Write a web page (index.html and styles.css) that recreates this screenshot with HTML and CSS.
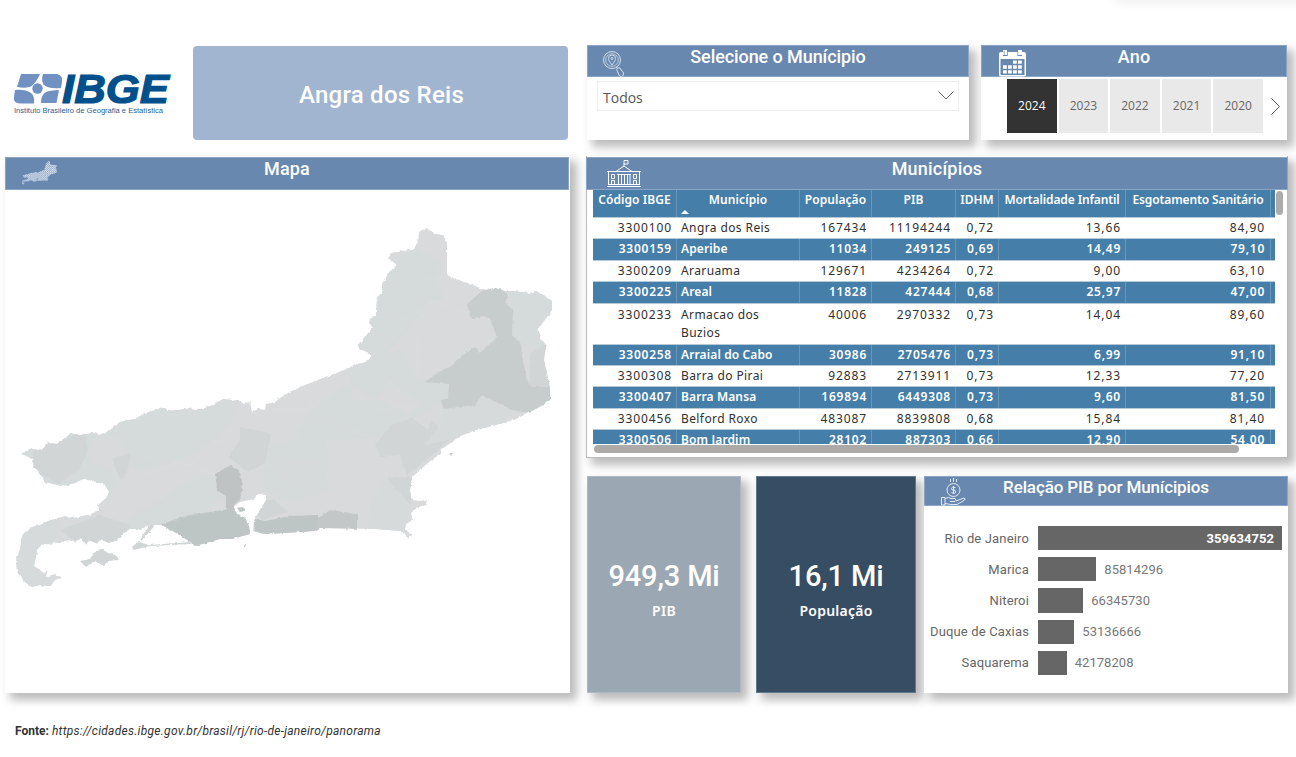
FILE: index.html
```html
<!DOCTYPE html>
<html lang="pt-BR">
<head>
<meta charset="utf-8">
<title>IBGE - Rio de Janeiro</title>
<link rel="stylesheet" href="styles.css">
</head>
<body>
<div class="page">
  <div class="top-shade"></div>
  <div class="columns">
    <section class="left">
      <header class="brand-row">
        <svg class="logo" viewBox="0 0 164 50" width="164" height="50">
          <g fill="#7191c2">
            <path d="M8 4H27Q23 13 18 16.500Q14 18.500 4 17Z"/>
            <path d="M30 4H44Q50 5 49 12L48 18Q34 19 30.500 14.500Q28 10 30 4Z"/>
            <path d="M46 20L43.500 33H28Q28 26 32 22.500Q37 20 46 20Z"/>
            <path d="M2 20Q12 19 18 23Q22 26 21 33.500H7Q0 33 1 27Z"/>
            <circle cx="24.500" cy="18.500" r="5.200"/>
          </g>
          <text class="logo-word" x="49" y="33" textLength="107" lengthAdjust="spacingAndGlyphs">IBGE</text>
          <text class="logo-sub" x="1" y="43" textLength="149" lengthAdjust="spacingAndGlyphs">Instituto Brasileiro de Geografia e Estatística</text>
        </svg>
        <div class="city">Angra dos Reis</div>
      </header>
      <article class="card map-card">
        <div class="bar bar-map">
          <svg class="icon icon-map" viewBox="0 215 570 380" width="37" height="25">
            <defs><pattern id="dots" width="32" height="32" patternUnits="userSpaceOnUse"><path d="M0 0h16v16h-16zM16 16h16v16h-16z" fill="#dfe7f1"/></pattern></defs>
            <use href="#state" fill="#8aa4c5"/>
            <use href="#state" fill="url(#dots)"/>
          </svg>
          <h2>Mapa</h2>
        </div>
        <svg class="map" viewBox="5 190 565 503" width="565" height="503">
          <defs>
            <path id="state" d="M21 454L32 448L42 450L48 443L57 444L71 433.500L80 435L96 432.500L99 435L109 431L120 422L134 419L150 411.500L164 408L167 411L187 409L190 407L193 410L205 408L213 405L223 399L240 401L244 404L250 401.500L252 412L258 409L265 410L266 404L275 402L287 393L305 385L320 379L340 371.500L358 364L371 359L371 354L365 351L359 349L358 345L373 327.500L369 324L371 317L376 316L377 298L382 292L382 284L388 274L397 265L388 258L392 253L402 251L413 250L418 242L419 232L427 228L434 233L445 236L447 244L447 275L455 279L468 283L485 290L495 288L505 291L513 291L530 293L536 291L547 297L552 301L552 310L538 329L541 339L546 345L544 360L550 387L550 400L543 405L530 412L516 419L500 424L476 430L460 436L441 450L440 454L428 463L418 472L412 477L410 490L411 498L418 501L427 500L426 504L417 508L411 513L413 520L406 524L405 530L410 533L412 536L408 539L402 531L375 529L320 528L314 531L285 533L265 534L253 531L254 521L257 514L262 507L266 500L266 495L258 494L254 499L240 502L233 507L237 514L245 518L249 526L250 534L232 539L220 539L195 546L192 543L178 534L162 525L150 525L140 529L130 529L122 534L118 540L108 543L100 539L98 544L89 540L86 545L81 538L75 543L70 540L55 543L40 545L37 551L34 566L44 573L48 570L46 577L55 574L62 578L55 580L50 586L40 585L32 587L25 582L17 572L16 560L20 550L22 535L30 528L48 521L65 516L72 518L92 514L99 509L98 505L107 497L109 492L105 485L97 482L83 479L75 483L62 486L45 482L41 475L34 467L32 459L27 456Z"/>
            <clipPath id="inside"><use href="#state"/></clipPath>
            <filter id="coast" x="0" y="0" width="1" height="1">
              <feTurbulence type="fractalNoise" baseFrequency=".25" numOctaves="2" seed="4" result="n"/>
              <feDisplacementMap in="SourceGraphic" in2="n" scale="3" xChannelSelector="R" yChannelSelector="G"/>
            </filter>
          </defs>
          <g filter="url(#coast)">
            <rect x="5" y="190" width="565" height="503" fill="#fff"/>
            <use href="#state" fill="#d9dadc"/>
            <g clip-path="url(#inside)">
              <path fill="#d5dadb" d="M15 440L71 425L98 430L87 450L90 462L112 470L118 482L110 496L75 490L30 485ZM98 430L160 405L240 396L232 420L215 440L180 460L135 470L120 440ZM397 262L410 245L440 262L435 280L445 300L430 300L415 320L395 345L375 362L350 350L365 310ZM505 290L560 290L555 350L520 345L513 335L512 300ZM420 405L390 380L375 400L345 385L310 410L295 440L270 445L263 470L265 490L290 500L320 495L330 470L325 440L385 438L400 420ZM350 365L400 350L418 378L447 382L448 400L415 418L380 400L352 400ZM190 480L160 500L130 515L110 545L150 545L200 530L240 500L225 475Z"/>
              <path fill="#d1d5d6" d="M60 440L85 432L88 450L80 468L58 484L35 470L33 450ZM112 458L131 454L127 472L121 480L116 470ZM100 515L130 525L118 543L80 545L60 530ZM240 427L271 433L265 463L248 472L228 457L240 440ZM375 445L391 425L412 418L428 430L432 420L450 440L420 465L407 475L400 455L380 456ZM386 478L414 477L410 505ZM530 353L545 345L552 388H529ZM247 500L275 500L288 512L262 520Z"/>
              <path fill="#d6dadb" d="M15 510L60 516L55 540L35 570L65 590H10ZM445 403L482 395L512 412L500 430L425 445L440 425ZM280 460L325 458L335 490L310 495L285 485ZM386 476L410 510L402 538L368 532L370 505Z"/>
              <path fill="#d9dadc" d="M330 460L370 457L378 475L365 495L340 500L325 480ZM205 510L222 500L227 514L208 516Z"/>
              <path fill="#c7cdcd" d="M467 304L483 290L497 287L508 294L505 303L513 310L512 335L521 344L522 356L527 380L530 387H553V404L530 413L512 410L482 395L475 405L443 409L441 400L448 399L449 384L425 382L442 370L450 367L460 357L475 347L480 353L497 337L490 319L484 316L471 319Z"/>
              <path fill="#bec5c5" d="M160 525L185 516L210 512L228 509L240 512L250 522L252 535L195 548ZM254 519L265 521L290 516L318 515V535H255Z"/>
              <path fill="#bfc3c4" d="M215 475L230 465L239 471L243 485L240 500L234 505L235 512L226 510V496L218 491Z"/>
              <path fill="#c3c7c8" d="M318 518L330 510L357 514V529H316Z"/>
              <path fill="none" stroke="#dcdee0" stroke-width=".6" d="M120 424L140 455L190 465L220 440M190 408L215 440M130 482L170 500M140 475L180 462L215 475M240 402L260 430L300 425M266 410L310 410L350 384M300 387L320 420L380 440M340 372L375 410L420 405M418 338V382L380 400M371 358L400 330L440 305M433 300L410 320L375 317M382 285L420 280L447 276M265 463L285 470M330 500L370 498M430 300L467 312"/>
            </g>
            <g fill="#d1d5d6">
              <path d="M80 561L90 559L95 552L102 549L108 553L115 555L119 560L109 561L104 566L95 561L86 567Z"/>
              <path d="M132 547L138 542L150 545L190 542L192 544L150 546L134 550ZM74 531L80 527L88 530L86 536L92 540L84 541ZM150 525L155 524L152 529L141 541L140 539Z"/>
              <path fill="#bec5c5" d="M237 508L247 506L249 510L240 512ZM243 545L246 544L245 547ZM449 454L453 454L451 456Z"/>
              <path fill="#fff" d="M240 506L250 500L262 497L258 505L252 512L247 511L244 508Z"/>
            </g>
          </g>
        </svg>
      </article>
    </section>

    <section class="right">
      <div class="filters">
        <article class="card select-card">
          <div class="bar">
            <svg class="icon icon-search" viewBox="0 0 24 28" width="24" height="28" fill="none" stroke="#d5dfec">
              <circle cx="10" cy="10" r="8.500"/><circle cx="10" cy="10" r="6.300" stroke-width=".8"/>
              <path d="M10 15C7 11 6.500 10 6.500 8.500A3.500 3.500 0 0 1 13.500 8.500C13.500 10 13 11 10 15Z"/><circle cx="10" cy="8.500" r="1"/>
              <path d="M14 18L16 16.500M14.500 19.500Q16 17 18 18L21.500 23Q22 26 19.500 26.500Q17.500 26.500 17 25Z"/>
            </svg>
            <h2>Selecione o Munícipio</h2>
          </div>
          <div class="dropdown"><span>Todos</span>
            <svg viewBox="0 0 16 9" width="16" height="9" fill="none" stroke="#666"><path d="M.5.500L8 8L15.500.5"/></svg>
          </div>
        </article>
        <article class="card year-card">
          <div class="bar">
            <svg class="icon icon-calendar" viewBox="0 0 27 27" width="27" height="27">
              <path fill="#fff" d="M2 2H4V0H8V2H19V0H23V2H25Q27 2 27 4V25Q27 26.500 25 26.500H2Q0 26.500 0 25V4Q0 2 2 2Z"/>
              <path fill="#6888af" d="M1.500 9H25.500V25H1.500ZM4.800 1H5.500V5H4.800ZM8 2H8.700V6H4V5H8ZM18.500 2H19.200V5H23V6H18.500Z"/>
              <path stroke="#fff" stroke-width="3.300" stroke-dasharray="3.800 1.200" fill="none" d="M14 12.200H23M4 17H23M4 21.800H23"/>
            </svg>
            <h2>Ano</h2>
          </div>
          <div class="years">
            <b class="on">2024</b><b>2023</b><b>2022</b><b>2021</b><b>2020</b>
            <svg viewBox="0 0 9 17" width="9" height="17" fill="none" stroke="#555"><path d="M.5.500L8.500 8.500L.5 16.500"/></svg>
          </div>
        </article>
      </div>

      <article class="card table-card">
        <div class="bar">
          <svg class="icon icon-hall" viewBox="0 0 34 28" width="34" height="28" fill="none" stroke="#fff">
            <path d="M17 6V.5H21V4H17M9 11.500L17 6L25 11.500M9.500 11.500H24.500M0 11.500H34M1.500 12V25M32.500 12V25M11.500 14V25M14.500 14V25M17.500 14V25M20.500 14V25M23 14V25M10 14.500H24M0 26.500H34M1 24.500H33"/>
            <path d="M4.500 14.500H7.500V18.500H4.500ZM4.500 24V20.500H7.500V24M26.500 14.500H29.500V18.500H26.500ZM26.500 24V20.500H29.500V24"/>
          </svg>
          <h2>Municípios</h2>
        </div>
        <div class="table-area">
          <div class="grid">
            <div class="row head"><span>Código IBGE</span><span>Município<i></i></span><span>População</span><span>PIB</span><span>IDHM</span><span>Mortalidade Infantil</span><span>Esgotamento Sanitário</span><span></span></div>
            <div class="row"><span>3300100</span><span>Angra dos Reis</span><span>167434</span><span>11194244</span><span>0,72</span><span>13,66</span><span>84,90</span><span></span></div>
            <div class="row alt"><span>3300159</span><span>Aperibe</span><span>11034</span><span>249125</span><span>0,69</span><span>14,49</span><span>79,10</span><span></span></div>
            <div class="row"><span>3300209</span><span>Araruama</span><span>129671</span><span>4234264</span><span>0,72</span><span>9,00</span><span>63,10</span><span></span></div>
            <div class="row alt"><span>3300225</span><span>Areal</span><span>11828</span><span>427444</span><span>0,68</span><span>25,97</span><span>47,00</span><span></span></div>
            <div class="row tall"><span>3300233</span><span>Armacao dos<br>Buzios</span><span>40006</span><span>2970332</span><span>0,73</span><span>14,04</span><span>89,60</span><span></span></div>
            <div class="row alt"><span>3300258</span><span>Arraial do Cabo</span><span>30986</span><span>2705476</span><span>0,73</span><span>6,99</span><span>91,10</span><span></span></div>
            <div class="row"><span>3300308</span><span>Barra do Pirai</span><span>92883</span><span>2713911</span><span>0,73</span><span>12,33</span><span>77,20</span><span></span></div>
            <div class="row alt"><span>3300407</span><span>Barra Mansa</span><span>169894</span><span>6449308</span><span>0,73</span><span>9,60</span><span>81,50</span><span></span></div>
            <div class="row"><span>3300456</span><span>Belford Roxo</span><span>483087</span><span>8839808</span><span>0,68</span><span>15,84</span><span>81,40</span><span></span></div>
            <div class="row alt"><span>3300506</span><span>Bom Jardim</span><span>28102</span><span>887303</span><span>0,66</span><span>12,90</span><span>54,00</span><span></span></div>
          </div>
          <div class="vthumb"></div>
        </div>
        <div class="hthumb"></div>
      </article>

      <div class="bottom">
        <article class="card kpi kpi-pib"><strong>949,3 Mi</strong><span>PIB</span></article>
        <article class="card kpi kpi-pop"><strong>16,1 Mi</strong><span>População</span></article>
        <article class="card chart-card">
          <div class="bar">
            <svg class="icon icon-money" viewBox="0 0 25 28" width="25" height="28" fill="none" stroke="#e4ebf4">
              <circle cx="12.500" cy="12" r="6.500"/><path d="M14.500 9.500Q10.500 8.500 10.500 10.500T12.500 12T14.500 14T10.500 14.500M12.500 8V16M9.500 1V4M12.500 0V4M15.500 1V4"/>
              <path d="M.5 19.500H4V27H.5ZM4 20.500Q8 18.500 10 20.500H14Q16 22.500 14 23.500H9M15 23L23 20Q25.500 20.500 23 22.500L16 26.500H10L4 25.500"/>
            </svg>
            <h2>Relação PIB por Munícipios</h2>
          </div>
          <div class="bars">
            <div class="item"><label>Rio de Janeiro</label><div class="fill" style="width:244px"><em>359634752</em></div></div>
            <div class="item"><label>Marica</label><div class="fill" style="width:58.300px"></div><em>85814296</em></div>
            <div class="item"><label>Niteroi</label><div class="fill" style="width:45.200px"></div><em>66345730</em></div>
            <div class="item"><label>Duque de Caxias</label><div class="fill" style="width:36.300px"></div><em>53136666</em></div>
            <div class="item"><label>Saquarema</label><div class="fill" style="width:28.700px"></div><em>42178208</em></div>
          </div>
        </article>
      </div>
    </section>
  </div>
  <footer><b>Fonte:</b> <cite>https://cidades.ibge.gov.br/brasil/rj/rio-de-janeiro/panorama</cite></footer>
</div>
</body>
</html>
```
FILE: styles.css
```css
* { box-sizing: border-box; }
body { margin: 0; background: #fff; font-family: Roboto, sans-serif; }
.page { position: relative; width: 1296px; height: 757px; overflow: hidden; }
.top-shade { position: absolute; right: -10px; top: -12px; width: 190px; height: 12px; box-shadow: 0 0 14px rgba(0,0,0,.1); }
.columns { display: flex; gap: 16px; padding: 45px 8px 0 5px; height: 693px; }
.left { width: 565px; display: flex; flex-direction: column; gap: 16px; }
.right { width: 702px; display: flex; flex-direction: column; }
.card { background: #fff; box-shadow: 6px 6px 9px 1px #bbb; }
.bar { display: flex; align-items: flex-start; justify-content: center; position: relative; background: #6888af; border: 1px solid #8aa5c6; }
.bar h2 { margin: -1px 0 0; color: #fff; font-size: 18px; line-height: 24px; font-weight: 500; letter-spacing: .2px; }
.icon { position: absolute; }

.brand-row { display: flex; height: 95px; padding: 1px 2px 0 8px; justify-content: space-between; }
.logo { margin-top: 24px; }
.logo-word { font: italic bold 40px/1 "Liberation Sans", sans-serif; fill: #00508c; stroke: #00508c; stroke-width: 1.2; }
.logo-sub { font: 8px/1 "Liberation Sans", sans-serif; fill: #1f5f96; }
.city { width: 375px; height: 94px; border-radius: 4px; background: #a2b5d0; color: #fff; font-size: 24px; font-weight: 500; letter-spacing: .25px; display: flex; align-items: center; justify-content: center; padding: 3px 0 0 2px; }
.map-card { height: 537px; padding-top: 1px; }
.bar-map { height: 33px; margin-right: 1px; }
.icon-map { left: 15px; top: 2px; }
.map { display: block; height: 503px; }

.filters { display: flex; gap: 12px; padding-left: 1px; height: 95px; }
.select-card { width: 382px; }
.year-card { width: 306px; }
.filters .bar { height: 32px; }
.filters .select-card h2 { letter-spacing: -.08px; }
.icon-search { left: 14px; top: 4px; }
.icon-calendar { left: 17px; top: 4px; }
.dropdown { margin: 4px 10px 0; height: 30px; border: 1px solid #eee; display: flex; align-items: center; justify-content: space-between; padding: 2px 4px 0 5px; font: 14px "Open Sans", sans-serif; color: #555; }
.dropdown svg { margin-bottom: 3px; }
.years { display: flex; gap: 2px; padding: 2px 0 0 26px; align-items: center; }
.years b { width: 49.600px; height: 54px; background: #e9e9e9; font: 12px/54px "Open Sans", sans-serif; color: #666; text-align: center; }
.years .on { background: #333; color: #fff; }
.years svg { margin-left: 6px; }

.table-card { margin-top: 16px; height: 302px; border: 1px solid #bbb; border-top: 0; padding-top: 1px; }
.table-card .bar { height: 33px; margin: 0 -1px; }
.icon-hall { left: 20px; top: 2px; }
.table-area { display: flex; height: 254px; padding-left: 6px; overflow: hidden; }
.grid { width: 682px; }
.row { display: grid; grid-template-columns: 83px 123px 72px 84px 43px 127px 145px 5px; height: 21.400px; font: 12px/20px "Noto Sans", sans-serif; letter-spacing: .9px; color: #303030; border-bottom: 1px solid #b5cad8; }
.row span { padding: 0 4px; text-align: right; white-space: nowrap; letter-spacing: inherit; }
.row span:nth-child(7) { padding-right: 5px; }
.row span:nth-child(2) { text-align: left; letter-spacing: .4px; }
.row span + span { border-left: 1px solid transparent; }
.row.alt, .row.head { background: #457ea8; color: #fff; font-weight: 600; }
.row.alt span + span, .row.head span + span { border-color: #6997b9; }
.row.alt { letter-spacing: .75px; }
.row.alt span:nth-child(2) { letter-spacing: .12px; }
.row.head { height: 28px; letter-spacing: .05px; position: relative; }
.row.head span { text-align: center; padding: 0; }
.row.head span:nth-child(2) { text-align: center; letter-spacing: .1px; }
.row.head span:nth-child(6) { letter-spacing: -.12px; }
.row.head span:nth-child(7) { letter-spacing: -.12px; }
.row.head i { position: absolute; left: 88px; bottom: 3px; border: 4px solid transparent; border-top: 0; border-bottom-color: #fff; }
.row.tall { height: 41px; line-height: 18px; padding-top: 2px; }
.vthumb { width: 7px; height: 24px; margin: 1px 0 0 1px; border-radius: 4px; background: #adabaa; }
.hthumb { width: 645px; height: 8px; margin: 1px 0 0 7px; border-radius: 4px; background: #adabaa; }

.bottom { display: flex; height: 217px; margin-top: 18px; padding-left: 1px; }
.kpi { display: flex; flex-direction: column; align-items: center; color: #fff; padding-top: 81px; }
.kpi strong { font-size: 29px; line-height: 36px; font-weight: 500; letter-spacing: -.15px; }
.kpi span { font: 600 14px/20px "Noto Sans", sans-serif; letter-spacing: .25px; margin-top: 7px; }
.kpi-pib { width: 154px; background: #9ba7b3; margin-right: 15px; border: 1px solid #afb9c3; }
.kpi-pop { width: 160px; background: #364d63; margin-right: 8px; border: 1px solid #60788c; }
.chart-card { width: 364px; }
.chart-card .bar { height: 30px; }
.chart-card h2 { font-size: 17px; line-height: 22px; letter-spacing: -.12px; }
.icon-money { left: 16px; top: 1px; }
.bars { display: flex; flex-direction: column; gap: 7px; padding-top: 20px; font-size: 13px; color: #666; }
.item { display: flex; align-items: center; height: 24.200px; }
.item label { width: 105px; margin-right: 9px; text-align: right; white-space: nowrap; letter-spacing: .15px; }
.fill { height: 24.200px; background: #666; display: flex; justify-content: flex-end; align-items: center; }
.item em { font-style: normal; margin-left: 8px; color: #777; letter-spacing: .05px; }
.fill em { color: #fff; font-weight: 700; margin-right: 8px; }

footer { padding: 29px 0 0 15px; font-size: 12px; line-height: 18px; color: #333; }
footer cite { font-style: italic; letter-spacing: .27px; }
```
